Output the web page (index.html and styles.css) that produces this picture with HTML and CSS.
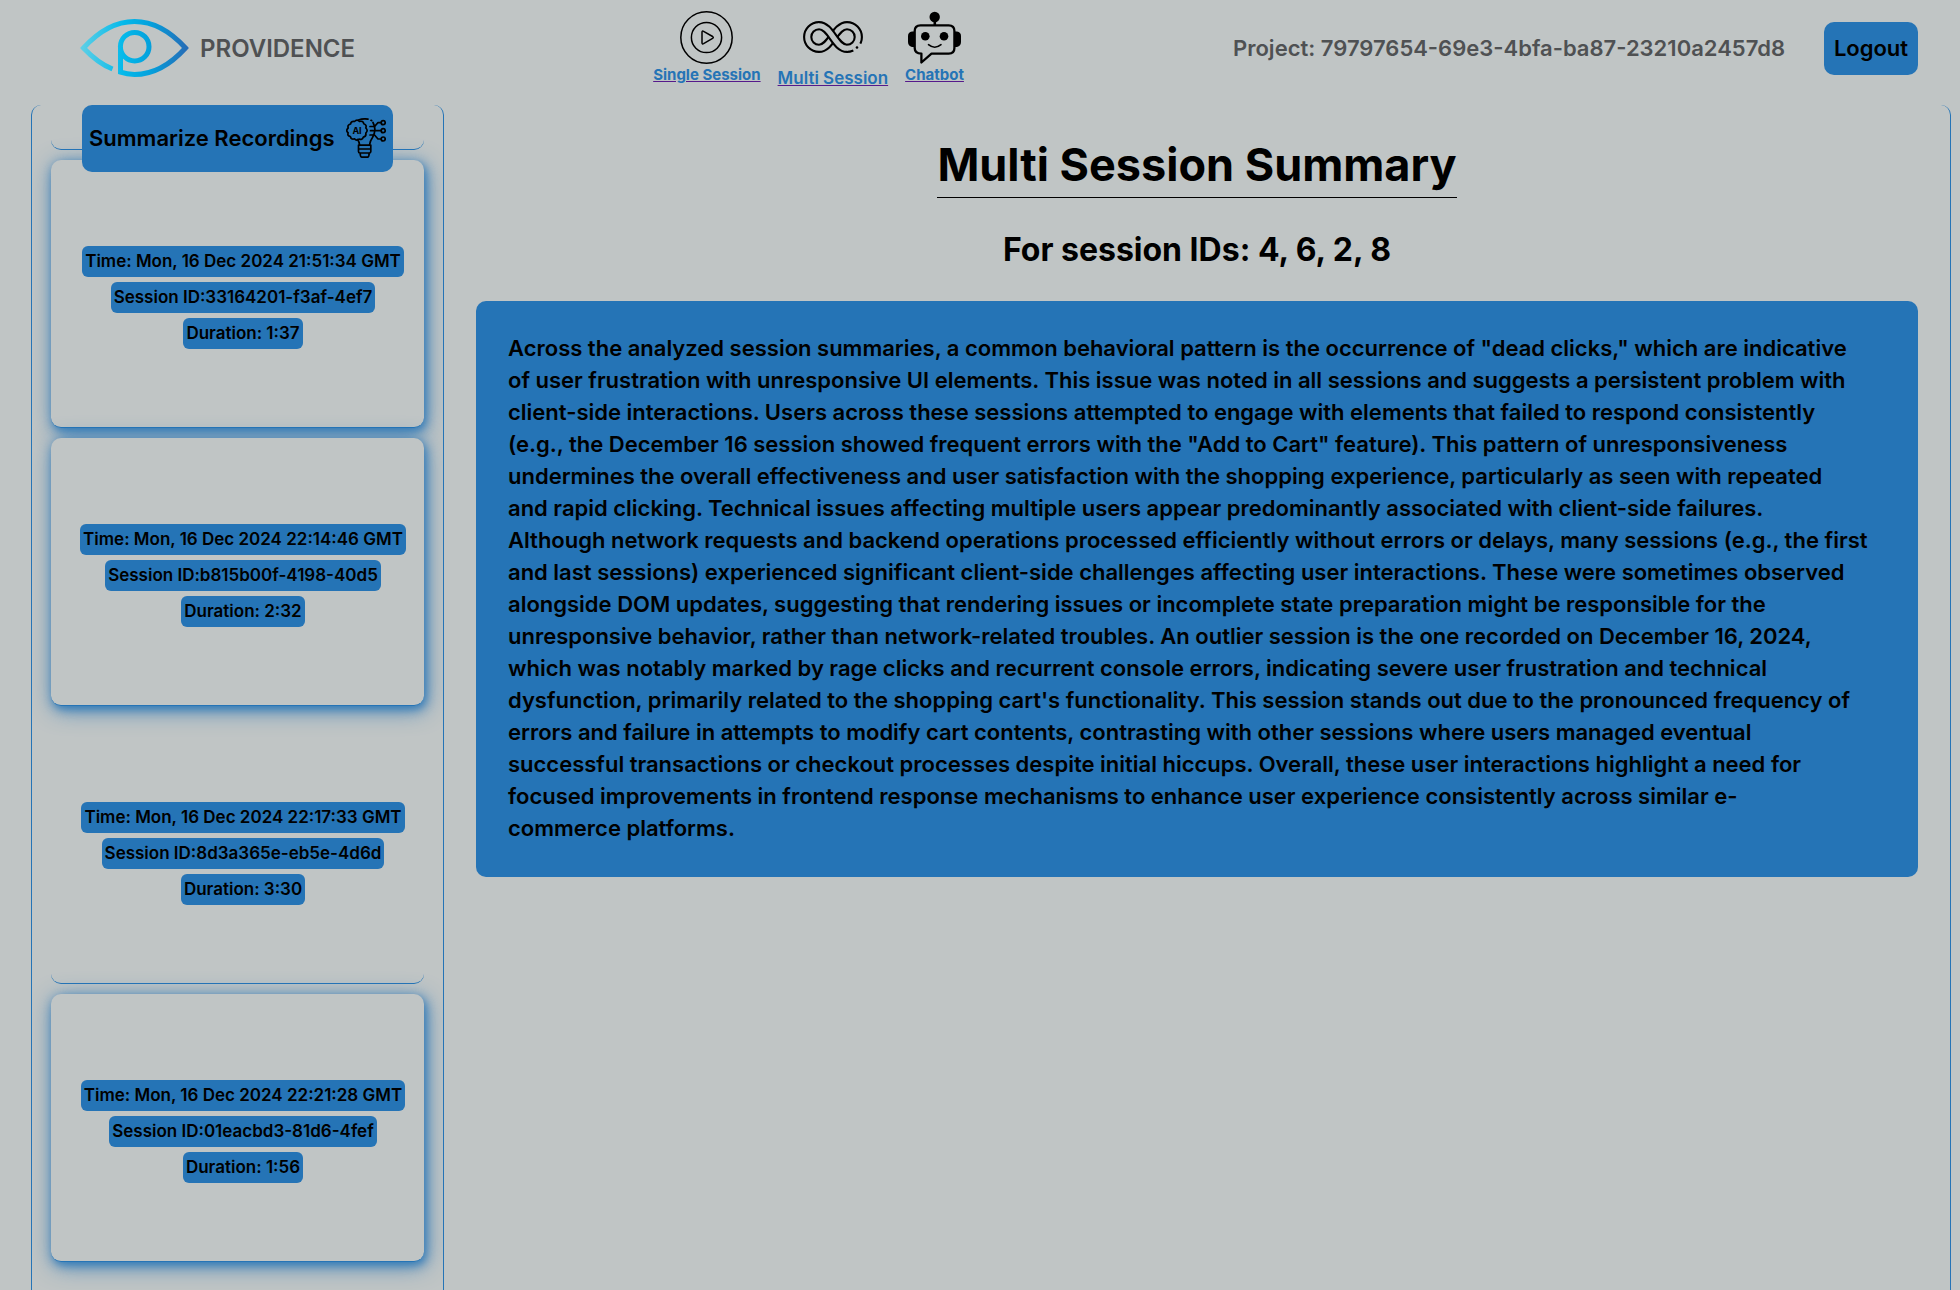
FILE: index.html
```
<!DOCTYPE html>
<html lang="en">
<head>
<meta charset="utf-8">
<title>Providence</title>
<link rel="stylesheet" href="styles.css">
</head>
<body>
<header class="topbar">
  <div class="brand">
    <svg class="brand-mark" viewBox="0 0 109 58" aria-hidden="true">
      <defs>
        <linearGradient id="eye" gradientUnits="userSpaceOnUse" x1="0" y1="0" x2="109" y2="0">
          <stop offset="0" stop-color="#5fd0e6"/>
          <stop offset="0.4" stop-color="#04b9ea"/>
          <stop offset="0.65" stop-color="#04a0dc"/>
          <stop offset="1" stop-color="#2869b4"/>
        </linearGradient>
      </defs>
      <g fill="none" stroke="url(#eye)" stroke-width="5">
        <path d="M32.5 50C22 46 12 38 3.5 29C18 13 34 2.5 54.5 2.5S91 13 105.5 29C91 45 75 55.5 54.5 55.5Q47 55.5 40.5 53.2V28"/>
        <circle cx="54.7" cy="27.7" r="14.3"/>
      </g>
    </svg>
    <span class="brand-name">PROVIDENCE</span>
  </div>
  <nav class="nav">
    <a class="nav-link" href="#single">
      <svg class="nav-icon" viewBox="0 0 53 53" aria-hidden="true">
        <g fill="none" stroke="#000" stroke-width="1.5">
          <circle cx="26.5" cy="26.5" r="25.7"/>
          <circle cx="26.5" cy="26.5" r="15.1"/>
          <path d="M22 21.2Q22 19.5 23.6 20.3L32.6 25.5Q34 26.5 32.6 27.4L23.6 32.7Q22 33.5 22 31.8Z"/>
        </g>
      </svg>
      <span>Single Session</span>
    </a>
    <a class="nav-link nav-link-active" href="#multi">
      <svg class="nav-icon" viewBox="0 0 60 60" aria-hidden="true">
        <g fill="none">
          <path stroke="#000" stroke-width="9.3" d="M44 41.3A11.3 11.3 0 0 0 44 18.7C32 18.7 28 41.3 16 41.3A11.3 11.3 0 0 1 16 18.7"/>
          <path class="gap" stroke-width="5.1" d="M44 41.3A11.3 11.3 0 0 0 44 18.7C32 18.7 28 41.3 16 41.3A11.3 11.3 0 0 1 16 18.7"/>
          <path stroke="#000" stroke-width="9.3" d="M15.5 18.7H16C28 18.7 32 41.3 44 41.3H44.5"/>
          <path class="gap" stroke-width="5.1" d="M15 18.7H16C28 18.7 32 41.3 44 41.3H45"/>
          <path class="gap" stroke-width="4" d="M58 37A15 15 0 0 1 50.5 43.8"/>
        </g>
        <circle cx="54" cy="40.5" r="1.3"/>
      </svg>
      <span>Multi Session</span>
    </a>
    <a class="nav-link" href="#chatbot">
      <svg class="nav-icon" viewBox="0 0 53 53" aria-hidden="true">
        <circle cx="26.7" cy="6" r="5.2"/>
        <path d="M25.5 10h2.6v5h-2.6zM6.5 20.5v15.5H4Q0 35 0 31V25Q0 21 4 20.5zM46.5 20.5v15.5H49Q53 35 53 31V25Q53 21 49 20.5z"/>
        <path fill="none" stroke="#000" stroke-width="2.3" stroke-linejoin="round" d="M12.5 14.3H40.7Q46.4 14.3 46.4 20V37Q46.4 42.6 40.7 42.6H23.5L13.4 51.5V42.6Q6.7 42.6 6.7 37V20Q6.7 14.3 12.5 14.3Z"/>
        <circle cx="17.3" cy="25.3" r="4.3"/>
        <circle cx="36" cy="25.3" r="4.3"/>
        <path fill="none" stroke="#000" stroke-width="1.6" stroke-linecap="round" d="M20.5 33.7Q26.7 38.8 33 33.7"/>
      </svg>
      <span>Chatbot</span>
    </a>
  </nav>
  <div class="account">
    <span class="project">Project: 79797654-69e3-4bfa-ba87-23210a2457d8</span>
    <button class="logout" type="button">Logout</button>
  </div>
</header>

<div class="workspace">
  <aside class="sidebar">
    <button class="summarize" type="button">
      <span>Summarize Recordings</span>
      <svg class="summarize-icon" viewBox="0 0 40 40" aria-hidden="true">
        <g fill="none" stroke="#000" stroke-width="1.7" stroke-linecap="round" stroke-linejoin="round">
          <path d="M8.5 3.5Q11 .8 13.5 3.5Q17 2.500 17.8 5.8Q21 7 19.8 10Q22.5 12.5 19.8 15Q20.5 18.5 17.3 19.2Q16 22.5 13 21Q10.5 23.5 8.5 20.8Q5 21.8 4.3 18.5Q1 17.8 2.2 14.8Q-.7 12.5 2.2 10Q1.2 6.8 4.5 6Q5.3 2.7 8.5 3.5Z"/>
          <path d="M12.5 2Q17 .3 22 1.1M25 2.3l.6.3M27 4.500Q31 12 26.5 19.5Q24 23 23.5 27M11.5 21.5Q13.5 24 13.6 27"/>
          <path d="M12.5 27.2H24.8V33.5Q24.8 35 23.3 35H14Q12.5 35 12.5 33.5ZM12.5 31H24.8M14 35.2L14.6 38Q15 39.2 16.2 39.2H21.2Q22.4 39.2 22.7 38L23.3 35.2"/>
          <path d="M24 8.5H28.5L32 4.7H35M24.5 12.7H35M24 17H28.5L32 21H35"/>
          <circle cx="37.2" cy="4.7" r="2"/>
          <circle cx="37.2" cy="12.7" r="2"/>
          <circle cx="37.2" cy="21" r="2"/>
        </g>
        <text class="ai" x="11" y="15.8" text-anchor="middle">AI</text>
      </svg>
    </button>
    <div class="card-end"></div>
    <ul class="cards">
      <li class="card selected">
        <span class="pill">Time: Mon, 16 Dec 2024 21:51:34 GMT</span>
        <span class="pill">Session ID:33164201-f3af-4ef7</span>
        <span class="pill">Duration: 1:37</span>
      </li>
      <li class="card selected">
        <span class="pill">Time: Mon, 16 Dec 2024 22:14:46 GMT</span>
        <span class="pill">Session ID:b815b00f-4198-40d5</span>
        <span class="pill">Duration: 2:32</span>
      </li>
      <li class="card">
        <span class="pill">Time: Mon, 16 Dec 2024 22:17:33 GMT</span>
        <span class="pill">Session ID:8d3a365e-eb5e-4d6d</span>
        <span class="pill">Duration: 3:30</span>
      </li>
      <li class="card selected">
        <span class="pill">Time: Mon, 16 Dec 2024 22:21:28 GMT</span>
        <span class="pill">Session ID:01eacbd3-81d6-4fef</span>
        <span class="pill">Duration: 1:56</span>
      </li>
    </ul>
  </aside>

  <main class="summary">
    <h1 class="title">Multi Session Summary</h1>
    <h2 class="subtitle">For session IDs: 4, 6, 2, 8</h2>
    <p class="report">Across the analyzed session summaries, a common behavioral pattern is the occurrence of "dead clicks," which are indicative<br>
of user frustration with unresponsive UI elements. This issue was noted in all sessions and suggests a persistent problem with<br>
client-side interactions. Users across these sessions attempted to engage with elements that failed to respond consistently<br>
(e.g., the December 16 session showed frequent errors with the "Add to Cart" feature). This pattern of unresponsiveness<br>
undermines the overall effectiveness and user satisfaction with the shopping experience, particularly as seen with repeated<br>
and rapid clicking. Technical issues affecting multiple users appear predominantly associated with client-side failures.<br>
Although network requests and backend operations processed efficiently without errors or delays, many sessions (e.g., the first<br>
and last sessions) experienced significant client-side challenges affecting user interactions. These were sometimes observed<br>
alongside DOM updates, suggesting that rendering issues or incomplete state preparation might be responsible for the<br>
unresponsive behavior, rather than network-related troubles. An outlier session is the one recorded on December 16, 2024,<br>
which was notably marked by rage clicks and recurrent console errors, indicating severe user frustration and technical<br>
dysfunction, primarily related to the shopping cart's functionality. This session stands out due to the pronounced frequency of<br>
errors and failure in attempts to modify cart contents, contrasting with other sessions where users managed eventual<br>
successful transactions or checkout processes despite initial hiccups. Overall, these user interactions highlight a need for<br>
focused improvements in frontend response mechanisms to enhance user experience consistently across similar e-<br>
commerce platforms.</p>
  </main>
</div>
</body>
</html>
```
FILE: styles.css
```
:root {
  --bg: #c0c5c5;
  --blue: #2574b6;
  --gray: #4f5153;
}

* {
  box-sizing: border-box;
}

body {
  margin: 0;
  height: 100vh;
  display: flex;
  flex-direction: column;
  overflow: hidden;
  background: var(--bg);
  color: #000;
  font-family: Inter, sans-serif;
  font-weight: 600;
}

button {
  border: 0;
  border-radius: 10px;
  background: var(--blue);
  color: #000;
  font: inherit;
  font-size: 22px;
  cursor: pointer;
}

/* Top bar */
.topbar {
  display: flex;
  justify-content: space-between;
  align-items: center;
  padding: 7px 42px 16px 80px;
}

.brand {
  display: flex;
  align-items: center;
  gap: 11px;
  padding-right: 29px;
  color: var(--gray);
  font-size: 24px;
}

.brand-mark {
  width: 109px;
  height: 58px;
}

.nav {
  display: flex;
  align-items: center;
  gap: 17px;
}

.nav-link {
  display: flex;
  flex-direction: column;
  align-items: center;
  color: var(--blue);
  font-size: 15px;
  font-weight: 700;
  line-height: 22px;
  text-decoration: none;
}

.nav-link span {
  text-decoration: underline;
  text-decoration-color: #551a8b;
}

.nav-link-active {
  font-size: 17px;
  font-weight: 600;
}

.nav-icon {
  width: 53px;
  height: 53px;
}

.nav-link-active .nav-icon {
  width: 60px;
  height: 60px;
}

.gap {
  stroke: var(--bg);
}

.account {
  display: flex;
  align-items: center;
  gap: 39px;
  color: var(--gray);
  font-size: 22px;
}

.logout {
  width: 94px;
  height: 53px;
  padding: 0;
}

/* Columns below the bar */
.workspace {
  flex: 1;
  display: flex;
  min-height: 0;
  padding: 0 9px 0 31px;
}

.sidebar {
  position: relative;
  flex: 0 0 413px;
  overflow: hidden;
  padding: 0 19px;
  border: solid var(--blue);
  border-width: 0 1px;
  border-radius: 10px 10px 0 0;
}

.summarize {
  position: absolute;
  z-index: 1;
  top: 0;
  left: 0;
  right: 0;
  display: flex;
  justify-content: space-between;
  align-items: center;
  width: 311px;
  height: 67px;
  margin: 0 auto;
  padding: 0 7px 2px;
}

.summarize-icon {
  width: 40px;
  height: 40px;
}

.ai {
  font-size: 9px;
  font-weight: 700;
}

.card-end {
  height: 45px;
  border-bottom: 1px solid var(--blue);
  border-radius: 10px;
}

.cards {
  display: flex;
  flex-direction: column;
  gap: 10px;
  margin: 10px 0 0;
  padding: 0;
  list-style: none;
}

.card {
  display: flex;
  flex-direction: column;
  align-items: center;
  justify-content: center;
  gap: 5px;
  height: 268px;
  padding: 8px 0 0 11px;
  border-bottom: 1px solid var(--blue);
  border-radius: 10px;
}

.selected {
  background: var(--bg);
  box-shadow: 2px 3px 8px rgba(37, 116, 182, 0.8), 2px 4px 22px rgba(37, 116, 182, 0.8);
}

.pill {
  padding: 3px;
  border-radius: 6px;
  background: var(--blue);
  font-size: 17px;
  line-height: 25px;
}

/* Summary panel */
.summary {
  flex: 1;
  display: flex;
  flex-direction: column;
  align-items: center;
  padding: 28px 32px;
  border-right: 1px solid var(--blue);
  border-radius: 10px 10px 0 0;
}

.title {
  margin: 0;
  border-bottom: 1px solid #000;
  font-size: 45px;
  line-height: 64px;
}

.subtitle {
  margin: 32px 0 31px;
  font-size: 32px;
  line-height: 40px;
}

.report {
  align-self: stretch;
  margin: 0;
  padding: 31px 32px 33px;
  border-radius: 10px;
  background: var(--blue);
  font-size: 22px;
  line-height: 32px;
}
```
